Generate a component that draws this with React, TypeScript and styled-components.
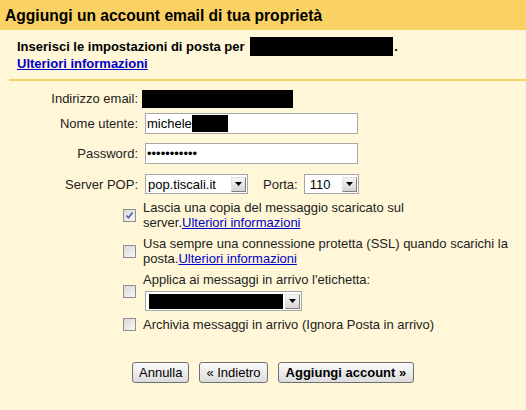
import React from "react";
import styled, { createGlobalStyle, css } from "styled-components";

const GlobalStyle = createGlobalStyle`
  html, body { margin: 0; padding: 0; background: #fff7d7; }
  body {
    font-family: "Liberation Sans", Arial, sans-serif;
    font-size: 13px;
    color: #222;
  }
`;

const Page = styled.div`
  width: 526px;
  min-height: 410px;
  background: #fff7d7;
`;

const Header = styled.div`
  height: 30px;
  box-sizing: border-box;
  padding: 2px 0 0 5px;
  background: #fad163;
  color: #000;
  font-weight: bold;
  font-size: 15.6px;
  line-height: 28px;
`;

const Intro = styled.div`
  padding: 8px 0 7px 17px;
  line-height: 17px;
  font-weight: bold;
  color: #000;
`;

const Redact = styled.span<{ $w: number; $h: number }>`
  display: inline-block;
  width: ${(p) => p.$w}px;
  height: ${(p) => p.$h}px;
  background: #000;
  flex: none;
`;

const IntroRedact = styled(Redact)`
  vertical-align: top;
  margin: -1px 1px -2px 2px;
`;

const Link = styled.a`
  color: #0000cc;
  text-decoration: underline;
  cursor: pointer;
`;

const Divider = styled.div`
  margin-left: 9px;
  border-top: 2px solid #fad163;
`;

const Form = styled.div`
  margin-top: 7px;
`;

const FieldRow = styled.div<{ $h: number }>`
  display: flex;
  align-items: center;
  height: ${(p) => p.$h}px;
`;

const Label = styled.div`
  width: 139px;
  box-sizing: border-box;
  padding-right: 1px;
  text-align: right;
  flex: none;
  color: #222;
`;

const Field = styled.div`
  display: flex;
  align-items: center;
  padding-left: 3px;
`;

const boxStyle = css`
  margin-left: 3px;
  width: 213px;
  height: 21px;
  box-sizing: border-box;
  border: 1px solid #a9a9ad;
  background: #fff;
  color: #000;
  font-family: "Liberation Sans", Arial, sans-serif;
  font-size: 13px;
`;

const TextBox = styled.div`
  ${boxStyle};
  display: flex;
  align-items: center;
  padding: 0 1px;
`;

const PasswordBox = styled.input`
  ${boxStyle};
  padding: 0 1px;
  outline: none;
`;

const SelectBox = styled.div<{ $w: number; $pad: number; $ml?: number }>`
  width: ${(p) => p.$w}px;
  height: 20px;
  margin-left: ${(p) => p.$ml ?? 0}px;
  box-sizing: border-box;
  border: 1px solid #a5a5a5;
  background: #fff;
  display: flex;
  align-items: center;
  padding: 0 1px 0 ${(p) => p.$pad}px;
  color: #000;
  flex: none;
`;

const SelectValue = styled.span`
  flex: 1;
  display: flex;
  align-items: center;
  white-space: nowrap;
  overflow: hidden;
`;

const ArrowButton = styled.span`
  width: 15px;
  height: 15px;
  box-sizing: border-box;
  border: 1px solid;
  border-color: #e2e2e2 #7f7f7f #7f7f7f #e2e2e2;
  background: linear-gradient(#f6f6f6, #d5d5d5);
  display: flex;
  align-items: center;
  justify-content: center;
  flex: none;
`;

const PortLabel = styled.span`
  margin: 0 6px 0 15px;
`;

const Options = styled.div`
  padding: 1px 0 0 123px;
  display: flex;
  flex-direction: column;
  gap: 6px;
`;

const OptionRow = styled.div`
  display: grid;
  grid-template-columns: 13px 1fr;
  column-gap: 7px;
  align-items: center;
  line-height: 15px;
  color: #222;
`;

const OptionBody = styled.div`
  display: flex;
  flex-direction: column;
  align-items: flex-start;
`;

const LabelSelectWrap = styled.div`
  margin: 4px 0 0 2px;
`;

const CheckBoxBox = styled.span`
  width: 13px;
  height: 13px;
  box-sizing: border-box;
  border: 1px solid #8e8f8f;
  background: linear-gradient(135deg, #d9d9d9, #f7f7f7);
  display: flex;
  align-items: center;
  justify-content: center;
`;

const Buttons = styled.div`
  display: flex;
  gap: 10px;
  padding-left: 132px;
  margin-top: 30px;
`;

const Button = styled.button<{ $primary?: boolean }>`
  height: 21px;
  padding: 0 ${(p) => (p.$primary ? 7 : 6)}px;
  border: 1px solid #707070;
  border-radius: 3px;
  background: linear-gradient(#fbfbfb, #dcdcdc);
  font-family: "Liberation Sans", Arial, sans-serif;
  font-size: 13px;
  font-weight: ${(p) => (p.$primary ? "bold" : "normal")};
  color: #000;
  line-height: 19px;
  cursor: pointer;
`;

const Arrow = () => (
  <ArrowButton>
    <svg width="7" height="4" viewBox="0 0 7 4">
      <polygon points="0,0 7,0 3.5,4" fill="#000" />
    </svg>
  </ArrowButton>
);

const Select = ({
  w,
  pad,
  ml,
  children,
}: {
  w: number;
  pad: number;
  ml?: number;
  children: React.ReactNode;
}) => (
  <SelectBox $w={w} $pad={pad} $ml={ml}>
    <SelectValue>{children}</SelectValue>
    <Arrow />
  </SelectBox>
);

const Checkbox = ({ checked }: { checked?: boolean }) => (
  <CheckBoxBox>
    {checked && (
      <svg width="9" height="9" viewBox="0 0 9 9">
        <path
          d="M1.5 4.5 L3.5 6.8 L7.6 1.6"
          fill="none"
          stroke="#4a5ea6"
          strokeWidth="1.6"
        />
      </svg>
    )}
  </CheckBoxBox>
);

export default function App() {
  return (
    <Page>
      <GlobalStyle />
      <Header>Aggiungi un account email di tua proprietà</Header>
      <Intro>
        Inserisci le impostazioni di posta per <IntroRedact $w={143} $h={19} />.
        <br />
        <Link>Ulteriori informazioni</Link>
      </Intro>
      <Divider />
      <Form>
        <FieldRow $h={21}>
          <Label>Indirizzo email:</Label>
          <Field>
            <Redact $w={151} $h={18} />
          </Field>
        </FieldRow>
        <FieldRow $h={29}>
          <Label>Nome utente:</Label>
          <Field>
            <TextBox>
              michele
              <Redact $w={36} $h={17} />
            </TextBox>
          </Field>
        </FieldRow>
        <FieldRow $h={31}>
          <Label>Password:</Label>
          <Field>
            <PasswordBox type="password" readOnly defaultValue="xxxxxxxxxxx" />
          </Field>
        </FieldRow>
        <FieldRow $h={30}>
          <Label>Server POP:</Label>
          <Field>
            <Select w={103} pad={2} ml={3}>
              pop.tiscali.it
            </Select>
            <PortLabel>Porta:</PortLabel>
            <Select w={55} pad={5}>
              110
            </Select>
          </Field>
        </FieldRow>
      </Form>
      <Options>
        <OptionRow>
          <Checkbox checked />
          <OptionBody>
            <span>
              Lascia una copia del messaggio scaricato sul
              <br />
              server.<Link>Ulteriori informazioni</Link>
            </span>
          </OptionBody>
        </OptionRow>
        <OptionRow>
          <Checkbox />
          <OptionBody>
            <span>
              Usa sempre una connessione protetta (SSL) quando scarichi la
              <br />
              posta.<Link>Ulteriori informazioni</Link>
            </span>
          </OptionBody>
        </OptionRow>
        <OptionRow>
          <Checkbox />
          <OptionBody>
            <span>Applica ai messaggi in arrivo l'etichetta:</span>
            <LabelSelectWrap>
              <Select w={157} pad={3}>
                <Redact $w={134} $h={15} />
              </Select>
            </LabelSelectWrap>
          </OptionBody>
        </OptionRow>
        <OptionRow>
          <Checkbox />
          <OptionBody>
            <span>Archivia messaggi in arrivo (Ignora Posta in arrivo)</span>
          </OptionBody>
        </OptionRow>
      </Options>
      <Buttons>
        <Button>Annulla</Button>
        <Button>« Indietro</Button>
        <Button $primary>Aggiungi account »</Button>
      </Buttons>
    </Page>
  );
}
